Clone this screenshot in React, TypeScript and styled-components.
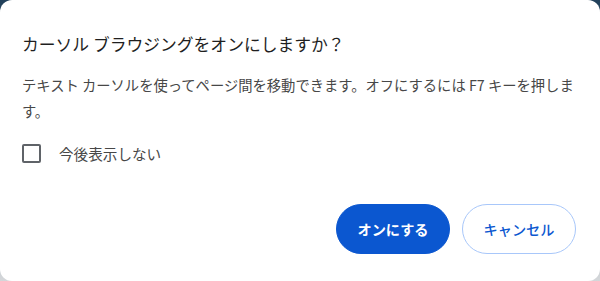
import React from "react";
import styled, { createGlobalStyle } from "styled-components";

const Global = createGlobalStyle`
  html, body {
    margin: 0;
    padding: 0;
    width: 600px;
    height: 281px;
    overflow: hidden;
    background: linear-gradient(180deg, #21405a 0%, #7a8a98 50%, #d4d7da 100%);
  }
  * { box-sizing: border-box; }
`;

const Dialog = styled.div`
  width: 600px;
  height: 281px;
  background: #ffffff;
  border-radius: 12px;
  padding: 32px 24px 27px 22px;
  display: flex;
  flex-direction: column;
  font-family: "Noto Sans CJK JP", "Noto Sans", sans-serif;
`;

const Title = styled.h1`
  margin: 0;
  font-size: 16.8px;
  line-height: 24px;
  font-weight: 400;
  color: #1f1f1f;
`;

const Body = styled.p`
  margin: 16px -4px 0 0;
  font-size: 14.3px;
  line-height: 26px;
  color: #474747;
`;

const CheckRow = styled.label`
  margin-top: 19px;
  display: flex;
  align-items: center;
  gap: 18px;
  height: 20px;
  font-size: 14.6px;
  color: #474747;
`;

const Box = styled.span`
  width: 19px;
  height: 19px;
  border: 2px solid #5f6368;
  border-radius: 2px;
  flex: none;
`;

const Actions = styled.div`
  margin-top: auto;
  display: flex;
  justify-content: flex-end;
  gap: 12px;
`;

const Button = styled.button<{ $primary?: boolean }>`
  width: 114px;
  height: 50px;
  border-radius: 25px;
  font-family: "Noto Sans CJK JP", "Noto Sans", sans-serif;
  font-size: 14.2px;
  font-weight: ${(p) => (p.$primary ? 700 : 500)};
  cursor: pointer;
  background: ${(p) => (p.$primary ? "#0b57d0" : "#ffffff")};
  color: ${(p) => (p.$primary ? "#ffffff" : "#0b57d0")};
  border: 1px solid ${(p) => (p.$primary ? "#0b57d0" : "#a8c7fa")};
`;

export default function App() {
  return (
    <>
      <Global />
      <Dialog>
        <Title>カーソル ブラウジングをオンにしますか？</Title>
        <Body>
          テキスト カーソルを使ってページ間を移動できます。オフにするには F7 キーを押します。
        </Body>
        <CheckRow>
          <Box />
          今後表示しない
        </CheckRow>
        <Actions>
          <Button $primary>オンにする</Button>
          <Button>キャンセル</Button>
        </Actions>
      </Dialog>
    </>
  );
}
